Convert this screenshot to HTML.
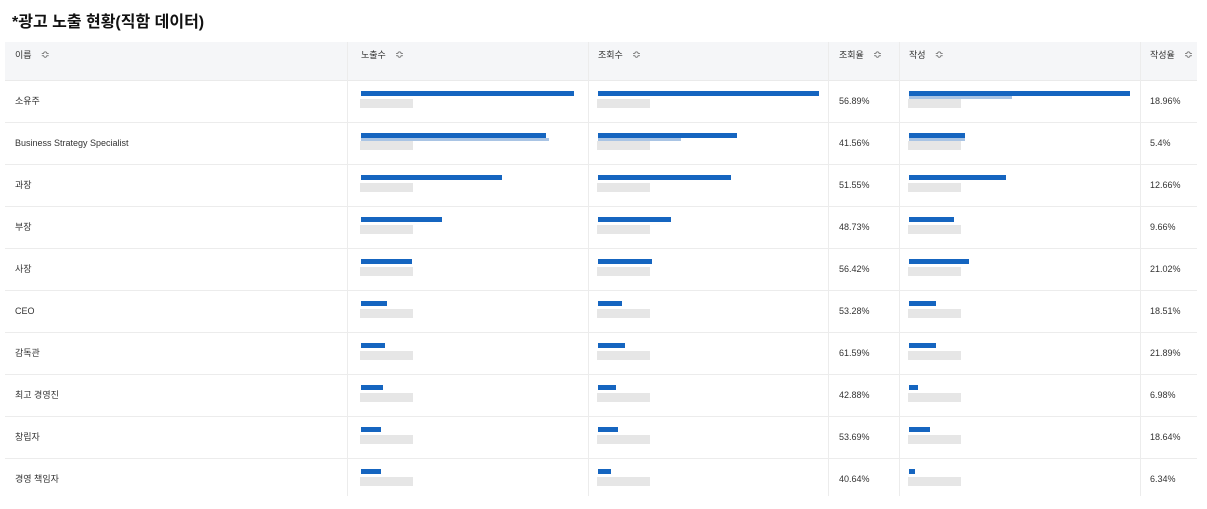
<!DOCTYPE html><html><head><meta charset="utf-8"><style>
body{margin:0;width:1207px;height:509px;background:#fff;font-family:"Liberation Sans","Noto Sans CJK KR",sans-serif;position:relative;overflow:hidden;color:#333}
.t{position:absolute;left:12px;top:8px;font-size:16px;font-weight:bold;color:#111}
.hd{position:absolute;left:5px;top:42px;width:1192px;height:38px;background:#f5f6f8;border-bottom:1px solid #eaeaea}
.vl{position:absolute;top:42px;width:1px;height:454px;background:#ececec}
.hl{position:absolute;left:5px;width:1192px;height:1px;background:#ececec}
.h{position:absolute;top:49px;font-size:9px;line-height:12px;color:#333}
.h i{font-style:normal;color:#777;margin-left:9px;font-size:11px}
.c{position:absolute;font-size:9px;line-height:12px;color:#333}
.b{position:absolute;height:5px;background:#1565c0}
.l{position:absolute;height:3px;background:#a9c4e4}
.g{position:absolute;height:9px;width:53px;background:#e6e6e6}
</style></head><body>
<div class="t">*광고 노출 현황(직함 데이터)</div>
<div class="hd"></div>
<div class="vl" style="left:347px"></div><div class="vl" style="left:588px"></div><div class="vl" style="left:828px"></div><div class="vl" style="left:899px"></div><div class="vl" style="left:1140px"></div>
<div class="h" style="left:15px">이름<i>≎</i></div>
<div class="h" style="left:361px">노출수<i>≎</i></div>
<div class="h" style="left:598px">조회수<i>≎</i></div>
<div class="h" style="left:839px">조회율<i>≎</i></div>
<div class="h" style="left:909px">작성<i>≎</i></div>
<div class="h" style="left:1150px">작성율<i>≎</i></div>
<div id="rows"></div>
<script>
var d=[["소유주",213,221,221,"56.89%","18.96%",[0,0,103]],["Business Strategy Specialist",185,139,56,"41.56%","5.4%",[188,83,56]],["과장",141,133,97,"51.55%","12.66%"],["부장",81,73,45,"48.73%","9.66%"],["사장",51,54,60,"56.42%","21.02%"],["CEO",26,24,27,"53.28%","18.51%"],["감독관",24,27,27,"61.59%","21.89%"],["최고 경영진",22,18,9,"42.88%","6.98%"],["창립자",20,20,21,"53.69%","18.64%"],["경영 책임자",20,13,6,"40.64%","6.34%"]];
var h="";d.forEach(function(r,i){var y=80+42*i;if(i>0)h+='<div class="hl" style="top:'+y+'px"></div>';
h+='<div class="c" style="left:15px;top:'+(y+15)+'px">'+r[0]+'</div>';
h+='<div class="c" style="left:839px;top:'+(y+15)+'px">'+r[4]+'</div><div class="c" style="left:1150px;top:'+(y+15)+'px">'+r[5]+'</div>';
[[361,r[1]],[598,r[2]],[909,r[3]]].forEach(function(p,k){h+='<div class="b" style="left:'+p[0]+'px;top:'+(y+11)+'px;width:'+p[1]+'px"></div>';
if(r[6]&&r[6][k])h+='<div class="l" style="left:'+p[0]+'px;top:'+(y+16)+'px;width:'+r[6][k]+'px"></div>';
h+='<div class="g" style="left:'+(p[0]-1)+'px;top:'+(y+19)+'px"></div>';});});
document.getElementById("rows").innerHTML=h;
</script>
</body></html>
